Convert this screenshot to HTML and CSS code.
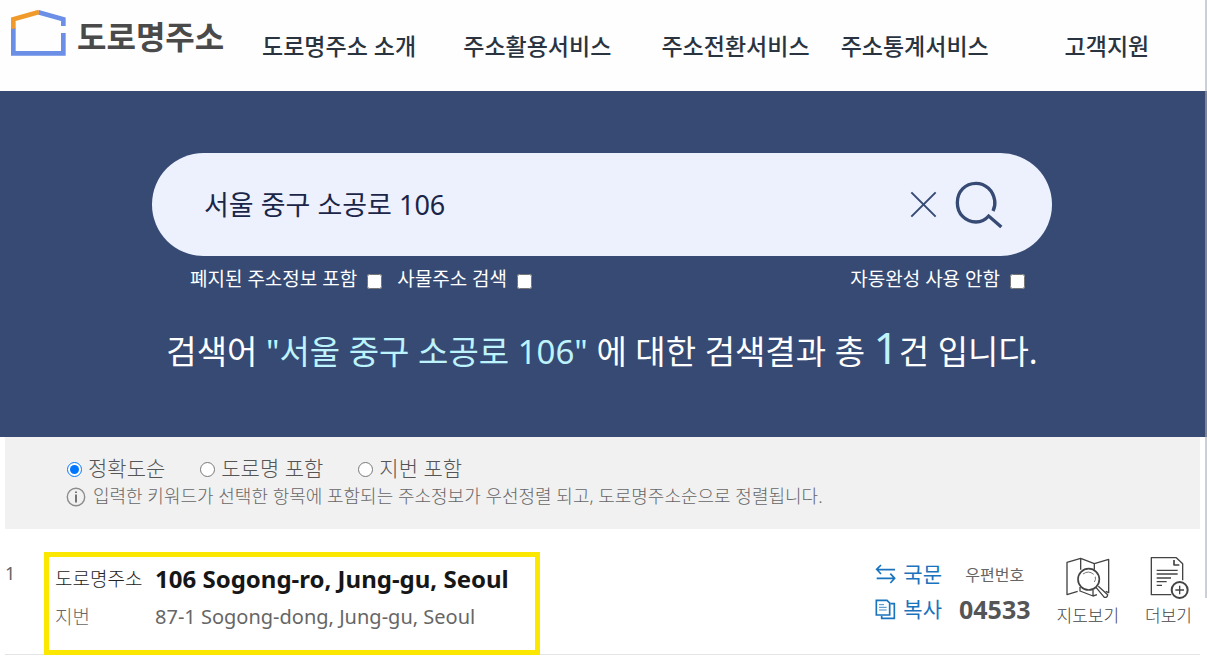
FILE: index.html
```html
<!DOCTYPE html>
<html lang="ko">
<head>
<meta charset="utf-8">
<meta name="viewport" content="width=device-width, initial-scale=1">
<title>도로명주소</title>
<link rel="stylesheet" href="styles.css">
</head>
<body>
<header class="header">
  <a class="logo" href="#">
    <svg class="logo-mark" viewBox="30 27 171 144" fill="none" stroke-width="14" aria-hidden="true">
      <path stroke="#6b8fe6" d="M40 84V160H190V99M190 78V58L115 37"/>
      <path stroke="#f09a2c" d="M40 86V58L117 36"/>
    </svg>
    <span>도로명주소</span>
  </a>
  <nav class="nav">
    <a href="#">도로명주소 소개</a>
    <a href="#">주소활용서비스</a>
    <a href="#">주소전환서비스</a>
    <a href="#">주소통계서비스</a>
    <a href="#">고객지원</a>
  </nav>
</header>
<main>
  <section class="hero">
    <form class="search">
      <div class="search-box">
        <input class="search-input" type="text" value="서울 중구 소공로 106" aria-label="주소 검색">
        <button class="icon-button" type="reset" aria-label="지우기">
          <svg class="icon-clear" viewBox="270 120 81 81" fill="none" stroke="#364a74" stroke-width="6" aria-hidden="true"><path d="M274 124L347 197M347 124L274 197"/></svg>
        </button>
        <button class="icon-button" type="submit" aria-label="검색">
          <svg class="icon-search" viewBox="405 90 144 144" fill="none" stroke="#364a74" stroke-width="10" aria-hidden="true"><path d="M519 180C524 170 526 160 524 148C519 118 496 97 468 97C435 97 412 122 412 155C412 188 436 213 468 213C484 213 495 208 506 195L544 228"/></svg>
        </button>
      </div>
      <div class="search-options">
        <label class="check">폐지된 주소정보 포함 <input type="checkbox"></label>
        <label class="check">사물주소 검색 <input type="checkbox"></label>
        <label class="check check-end">자동완성 사용 안함 <input type="checkbox"></label>
      </div>
    </form>
    <h1 class="summary">검색어 <em>"서울 중구 소공로 106"</em> 에 대한 검색결과 총 <strong>1</strong>건 입니다.</h1>
  </section>
  <section class="sort">
    <div class="sort-options">
      <label class="radio"><input type="radio" name="sort" checked>정확도순</label>
      <label class="radio"><input type="radio" name="sort">도로명 포함</label>
      <label class="radio"><input type="radio" name="sort">지번 포함</label>
    </div>
    <p class="hint">
      <svg class="icon-info" viewBox="0 0 20 20" fill="none" aria-hidden="true"><circle cx="10" cy="10" r="8.7" stroke="#8c8c8c" stroke-width="1.4"/><path d="M10 4.5V6M10 7.5V15.5" stroke="#555" stroke-width="1.6"/></svg>
      <span>입력한 키워드가 선택한 항목에 포함되는 주소정보가 우선정렬 되고, 도로명주소순으로 정렬됩니다.</span>
    </p>
  </section>
  <article class="result">
    <span class="result-number">1</span>
    <dl class="address">
      <dt class="road-label">도로명주소</dt>
      <dd class="road">106 Sogong-ro, Jung-gu, Seoul</dd>
      <dt>지번</dt>
      <dd>87-1 Sogong-dong, Jung-gu, Seoul</dd>
    </dl>
    <div class="links">
      <button class="link" type="button">
        <svg viewBox="36 66 63 63" fill="none" stroke="#1a73bd" stroke-width="5" aria-hidden="true"><path d="M54 69L41 82L54 96M42 83H96M82 95L95 109L82 123M94 109H41"/></svg>국문
      </button>
      <button class="link" type="button">
        <svg viewBox="36 171 63 63" fill="none" stroke="#1a73bd" stroke-width="5" aria-hidden="true"><path d="M40 175H72L80 183V219H40Z"/><path d="M82 185H94V229H56V221"/><path stroke-width="2.5" d="M48 188H63M48 196H71M48 204H71"/></svg>복사
      </button>
    </div>
    <div class="zip">
      <span>우편번호</span>
      <strong>04533</strong>
    </div>
    <div class="actions">
      <button class="action" type="button">
        <svg class="icon-map" viewBox="72 140 138 132" fill="none" stroke="#444" stroke-width="4" stroke-linejoin="round" aria-hidden="true">
          <path d="M110 246L78 256V159L119 147L160 163L203 150V250L194 246M119 147V181M160 163V181M117 233V245L156 260L168 256M156 241V260"/>
          <circle cx="143" cy="210" r="32" stroke-width="5"/>
          <path d="M126 194Q143 182 158 195M163 202Q165 212 160 218" stroke="#777" stroke-width="3"/>
          <path d="M165 234L190 264Q199 266 200 256L172 231"/>
        </svg>지도보기
      </button>
      <button class="action" type="button">
        <svg class="icon-more" viewBox="324 138 120 132" fill="none" stroke="#444" stroke-width="4" stroke-linejoin="round" aria-hidden="true">
          <path d="M391 254H331V143H406L425 161V211"/>
          <path d="M399 150V165H415" stroke-width="5"/>
          <path d="M347 181H410M347 192H410M347 204H390M347 215H377M347 226H363"/>
          <circle cx="416" cy="240" r="24" stroke-width="6"/>
          <path d="M416 227V253M403 240H429"/>
        </svg>더보기
      </button>
    </div>
  </article>
</main>
<div class="scroll-thumb" aria-hidden="true"></div>
</body>
</html>
```
FILE: styles.css
```css
* { box-sizing: border-box; }
body {
  margin: 0;
  position: relative;
  background: #fff;
  color: #666;
  font-family: "Noto Sans", "Noto Sans CJK KR", sans-serif;
}
a { color: inherit; text-decoration: none; }
button { border: 0; padding: 0; background: none; font: inherit; color: inherit; }
svg { display: block; flex: none; }

.header { display: flex; height: 91px; background: #fefefe; }
.logo {
  display: flex;
  gap: 10px;
  width: 240px;
  padding: 9px 0 0 10px;
  color: #4a4a4a;
  font-size: 32px;
  font-weight: 700;
  line-height: 56px;
  white-space: nowrap;
}
.logo-mark { width: 57px; height: 48px; }
.nav {
  flex: 1;
  display: grid;
  grid-template-columns: 198fr 198fr 198fr 160fr 212fr;
  align-items: center;
  color: #2a3440;
  font-size: 23px;
  font-weight: 500;
  line-height: 32px;
  text-align: center;
  white-space: nowrap;
}
.nav a:last-child { padding-left: 12px; }

.hero {
  display: flex;
  flex-direction: column;
  align-items: center;
  padding: 62px 19px 58px 16px;
  background: #364a74;
  color: #fff;
}
.search { width: 100%; max-width: 900px; }
.search-box {
  display: flex;
  align-items: center;
  gap: 18px;
  height: 103px;
  padding: 0 49px 0 52px;
  border-radius: 52px;
  background: #ecf1fd;
}
.search-input {
  flex: 1;
  min-width: 0;
  border: 0;
  padding: 0;
  background: none;
  color: #1b2547;
  font: 400 27px/40px "Noto Sans", "Noto Sans CJK KR", sans-serif;
}
.icon-clear { width: 27px; height: 27px; }
.icon-search { width: 48px; height: 48px; }
.search-options {
  display: flex;
  gap: 15px;
  padding: 8px 27px 0 38px;
  font-size: 19px;
  line-height: 30px;
}
.check { display: flex; align-items: center; gap: 10px; }
.check input { width: 15px; height: 15px; margin: 5px 0 0; }
.check-end { margin-left: auto; }
.summary {
  margin: 29px 0 0;
  font-size: 33px;
  font-weight: 400;
  line-height: 55px;
}
.summary em, .summary strong { color: #bdf3fc; font-style: normal; font-weight: 400; }
.summary strong { font-size: 44px; line-height: 48px; }

.sort { margin: 0 7px 0 5px; padding: 15px 61px 20px; background: #f1f1f1; }
.sort-options { display: flex; gap: 34px; color: #555; font-size: 21px; font-weight: 300; line-height: 32px; }
.radio { display: flex; align-items: center; gap: 6px; }
.radio input { width: 15px; height: 15px; margin: 3px 0 0 1px; }
.hint {
  display: flex;
  align-items: center;
  gap: 7px;
  margin: 0;
  color: #666;
  font-size: 18px;
  font-weight: 300;
  line-height: 25px;
}
.icon-info { width: 20px; height: 20px; }

.result {
  display: flex;
  align-items: flex-start;
  margin: 0 7px 0 5px;
  padding-top: 23px;
  background: linear-gradient(#e4e4e4, #e4e4e4) bottom / 100% 1px no-repeat;
}
.result-number { width: 39px; padding-top: 7px; font-size: 18px; line-height: 28px; }
.address {
  display: grid;
  grid-template-columns: 100px 1fr;
  width: 496px;
  margin: 0;
  padding: 3px 6px 14px;
  border: 5px solid #fce700;
  font-size: 19px;
  line-height: 38px;
  white-space: nowrap;
}
.address dt { font-weight: 300; }
.address dd { margin: 0; font-size: 20px; }
.address .road-label { color: #222; }
.address .road { color: #161616; font-size: 24px; font-weight: 700; }
.links { display: grid; gap: 3px; margin-left: auto; padding-top: 6px; }
.link { display: flex; align-items: center; gap: 7px; color: #1a73bd; font-size: 21px; line-height: 32px; }
.link svg { width: 21px; height: 21px; }
.zip { display: grid; justify-items: center; margin-left: 17px; padding-top: 9px; }
.zip span { font-size: 16px; line-height: 28px; }
.zip strong { font-size: 25px; line-height: 40px; color: #555; }
.actions { display: flex; gap: 26px; margin: 4px 8px 0 26px; }
.action { display: grid; justify-items: center; gap: 2px; color: #444; font-size: 17px; font-weight: 300; line-height: 28px; }
.icon-map { width: 46px; height: 44px; }
.icon-more { width: 40px; height: 44px; }

.scroll-thumb {
  position: absolute;
  top: 0;
  right: 0;
  width: 2px;
  height: 598px;
  background: rgb(170 175 185 / 60%);
}
```
